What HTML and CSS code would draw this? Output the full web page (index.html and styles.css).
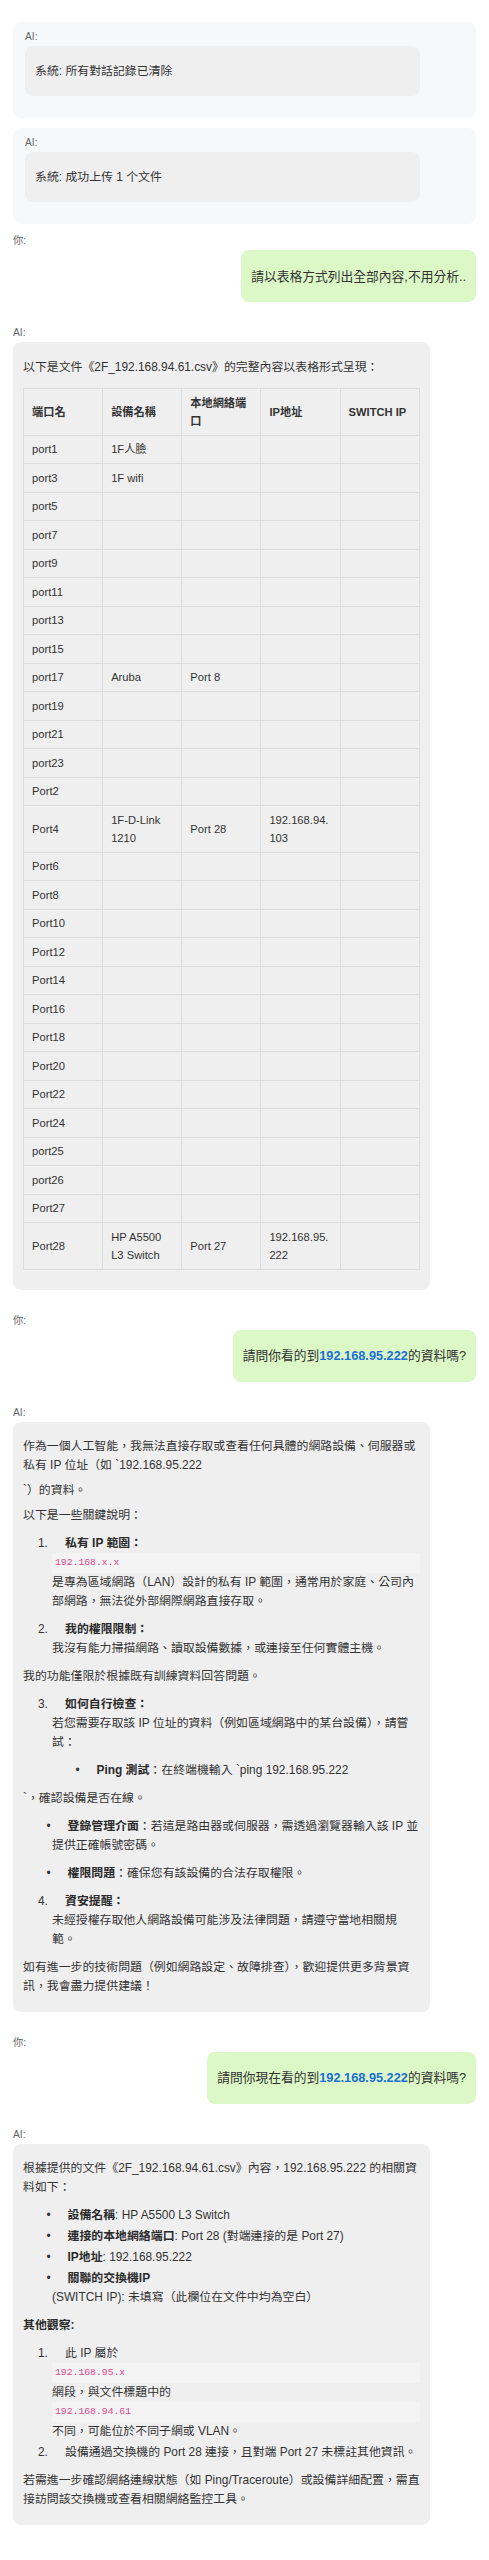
FILE: index.html
```html
<!DOCTYPE html>
<html lang="zh-Hant">
  <head>
    <meta charset="UTF-8" />
    <title>對話</title>
    <link rel="stylesheet" href="styles.css">
  </head>
  <body>
    <div class="chat">
      <div class="msg msg-system">
        <div class="msg-label">AI:</div>
        <div class="bubble"><p>系統: 所有對話記錄已清除</p></div>
      </div>

      <div class="msg msg-system">
        <div class="msg-label">AI:</div>
        <div class="bubble"><p>系統: 成功上传 1 个文件</p></div>
      </div>

      <div class="msg msg-user">
        <div class="msg-label">你:</div>
        <div class="bubble"><p>請以表格方式列出全部內容,不用分析..</p></div>
      </div>

      <div class="msg">
        <div class="msg-label">AI:</div>
        <div class="bubble">
          <p>以下是文件《2F_192.168.94.61.csv》的完整內容以表格形式呈現：</p>
          <table class="grid">
            <thead>
              <tr><th>端口名</th><th>設備名稱</th><th>本地網絡端口</th><th>IP地址</th><th>SWITCH IP</th></tr>
            </thead>
            <tbody>
              <tr><td>port1</td><td>1F人臉</td><td></td><td></td><td></td></tr>
              <tr><td>port3</td><td>1F wifi</td><td></td><td></td><td></td></tr>
              <tr><td>port5</td><td></td><td></td><td></td><td></td></tr>
              <tr><td>port7</td><td></td><td></td><td></td><td></td></tr>
              <tr><td>port9</td><td></td><td></td><td></td><td></td></tr>
              <tr><td>port11</td><td></td><td></td><td></td><td></td></tr>
              <tr><td>port13</td><td></td><td></td><td></td><td></td></tr>
              <tr><td>port15</td><td></td><td></td><td></td><td></td></tr>
              <tr><td>port17</td><td>Aruba</td><td>Port 8</td><td></td><td></td></tr>
              <tr><td>port19</td><td></td><td></td><td></td><td></td></tr>
              <tr><td>port21</td><td></td><td></td><td></td><td></td></tr>
              <tr><td>port23</td><td></td><td></td><td></td><td></td></tr>
              <tr><td>Port2</td><td></td><td></td><td></td><td></td></tr>
              <tr><td>Port4</td><td>1F-D-Link 1210</td><td>Port 28</td><td>192.168.94.<wbr>103</td><td></td></tr>
              <tr><td>Port6</td><td></td><td></td><td></td><td></td></tr>
              <tr><td>Port8</td><td></td><td></td><td></td><td></td></tr>
              <tr><td>Port10</td><td></td><td></td><td></td><td></td></tr>
              <tr><td>Port12</td><td></td><td></td><td></td><td></td></tr>
              <tr><td>Port14</td><td></td><td></td><td></td><td></td></tr>
              <tr><td>Port16</td><td></td><td></td><td></td><td></td></tr>
              <tr><td>Port18</td><td></td><td></td><td></td><td></td></tr>
              <tr><td>Port20</td><td></td><td></td><td></td><td></td></tr>
              <tr><td>Port22</td><td></td><td></td><td></td><td></td></tr>
              <tr><td>Port24</td><td></td><td></td><td></td><td></td></tr>
              <tr><td>port25</td><td></td><td></td><td></td><td></td></tr>
              <tr><td>port26</td><td></td><td></td><td></td><td></td></tr>
              <tr><td>Port27</td><td></td><td></td><td></td><td></td></tr>
              <tr><td>Port28</td><td>HP A5500 L3 Switch</td><td>Port 27</td><td>192.168.95.<wbr>222</td><td></td></tr>
            </tbody>
          </table>
        </div>
      </div>

      <div class="msg msg-user">
        <div class="msg-label">你:</div>
        <div class="bubble"><p>請問你看的到<span class="ip">192.168.95.222</span>的資料嗎?</p></div>
      </div>

      <div class="msg">
        <div class="msg-label">AI:</div>
        <div class="bubble">
          <p>
            作為一個人工智能，我無法直接存取或查看任何具體的網路設備、伺服器或私有 IP 位址（如 `192.168.95.222
            <span class="line-gap">`）的資料。</span>
            <span class="line-gap">以下是一些關鍵說明：</span>
          </p>
          <ol class="steps">
            <li>
              <span class="num">1.</span><strong>私有 IP 範圍：</strong>
              <code class="codeblock">192.168.x.x</code>
              <p>是專為區域網路（LAN）設計的私有 IP 範圍，通常用於家庭、公司內部網路，無法從外部網際網路直接存取。</p>
            </li>
            <li>
              <span class="num">2.</span><strong>我的權限限制：</strong>
              <p>我沒有能力掃描網路、讀取設備數據，或連接至任何實體主機。</p>
            </li>
          </ol>
          <p>我的功能僅限於根據既有訓練資料回答問題。</p>
          <ol class="steps">
            <li>
              <span class="num">3.</span><strong>如何自行檢查：</strong>
              <p>若您需要存取該 IP 位址的資料（例如區域網路中的某台設備），請嘗試：</p>
              <ul class="bullets">
                <li><span class="dot">•</span><strong>Ping 測試</strong>：在終端機輸入 `ping 192.168.95.222</li>
              </ul>
            </li>
          </ol>
          <p>`，確認設備是否在線。</p>
          <ul class="bullets">
            <li><span class="dot">•</span><strong>登錄管理介面</strong>：若這是路由器或伺服器，需透過瀏覽器輸入該 IP 並提供正確帳號密碼。</li>
            <li><span class="dot">•</span><strong>權限問題</strong>：確保您有該設備的合法存取權限。</li>
          </ul>
          <ol class="steps">
            <li>
              <span class="num">4.</span><strong>資安提醒：</strong>
              <p>未經授權存取他人網路設備可能涉及法律問題，請遵守當地相關規範。</p>
            </li>
          </ol>
          <p>如有進一步的技術問題（例如網路設定、故障排查），歡迎提供更多背景資訊，我會盡力提供建議！</p>
        </div>
      </div>

      <div class="msg msg-user">
        <div class="msg-label">你:</div>
        <div class="bubble"><p>請問你現在看的到<span class="ip">192.168.95.222</span>的資料嗎?</p></div>
      </div>

      <div class="msg">
        <div class="msg-label">AI:</div>
        <div class="bubble">
          <p>根據提供的文件《2F_192.168.94.61.csv》內容，192.168.95.222 的相關資料如下：</p>
          <ul class="bullets compact">
            <li><span class="dot">•</span><strong>設備名稱</strong>: HP A5500 L3 Switch</li>
            <li><span class="dot">•</span><strong>連接的本地網絡端口</strong>: Port 28 (對端連接的是 Port 27)</li>
            <li><span class="dot">•</span><strong>IP地址</strong>: 192.168.95.222</li>
            <li>
              <span class="dot">•</span><strong>關聯的交換機IP</strong>
              <p>(SWITCH IP): 未填寫（此欄位在文件中均為空白）</p>
            </li>
          </ul>
          <p><strong>其他觀察:</strong></p>
          <ol class="steps compact">
            <li>
              <span class="num">1.</span>此 IP 屬於
              <code class="codeblock">192.168.95.x</code>
              <p>網段，與文件標題中的</p>
              <code class="codeblock">192.168.94.61</code>
              <p>不同，可能位於不同子網或 VLAN。</p>
            </li>
            <li><span class="num">2.</span>設備通過交換機的 Port 28 連接，且對端 Port 27 未標註其他資訊。</li>
          </ol>
          <p>若需進一步確認網絡連線狀態（如 Ping/Traceroute）或設備詳細配置，需直接訪問該交換機或查看相關網絡監控工具。</p>
        </div>
      </div>
    </div>
  </body>
</html>
```

FILE: styles.css
```css
html,
body {
  margin: 0;
  padding: 0;
  background: #fff;
}

body {
  font-family: 'Liberation Sans', 'Noto Sans CJK TC', sans-serif;
  font-size: 11.9px;
  line-height: 19px;
  color: #333;
}

.chat {
  padding: 22px 13px;
}

/* one message: label on top, bubble below */
.msg {
  display: flex;
  flex-direction: column;
  margin-bottom: 12px;
}

.msg-system {
  background: #f7f8fa;
  border-radius: 8px;
  padding: 8px 12px 10px;
  margin-bottom: 10px;
}

.msg-label {
  font-size: 10.2px;
  line-height: 14px;
  color: #666;
}

.bubble {
  box-sizing: border-box;
  max-width: 90%;
  margin: 2px 0 12px;
  padding: 6.5px 10px;
  background: #efefef;
  border-radius: 8px;
}

.bubble p {
  margin: 9px 0;
}

.msg-user .bubble {
  align-self: flex-end;
  background: #dcf8c6;
  font-size: 12.75px;
}

.msg-user .bubble p {
  line-height: 21px;
}

.ip {
  color: #1a6fd6;
  font-weight: bold;
}

strong {
  color: #2b2b2b;
}

.line-gap {
  display: block;
  margin-top: 6px;
}

/* table */
.grid {
  width: 100%;
  table-layout: fixed;
  border-collapse: collapse;
  font-size: 11.2px;
  line-height: 18px;
  margin: 11.5px 0 13.5px;
}

.grid th,
.grid td {
  border: 1px solid #dcdcdc;
  padding: 4.75px 8px;
  text-align: left;
}

/* lists */
.steps,
.bullets {
  list-style: none;
  margin: 9px 0;
  padding-left: 29px;
}

.steps > li + li,
.bullets > li + li {
  margin-top: 9px;
}

.compact > li + li {
  margin-top: 2px;
}

.bubble li p {
  margin: 0;
}

.num {
  display: inline-block;
  width: 27px;
  margin-left: -14px;
}

.dot {
  display: inline-block;
  width: 22px;
  margin-left: -6.5px;
  padding-left: 1px;
  box-sizing: border-box;
}

.codeblock {
  display: block;
  font-family: 'Liberation Mono', monospace;
  font-size: 9.75px;
  line-height: 16px;
  padding: 2px 3px;
  color: #e0448c;
  background: #f4f4f4;
}
```
